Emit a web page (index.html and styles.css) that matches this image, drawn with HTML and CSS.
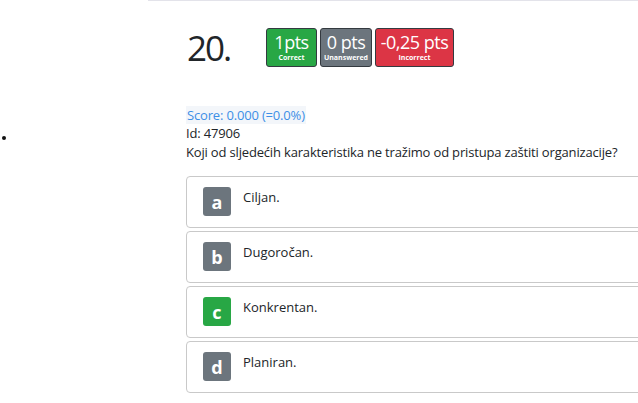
FILE: index.html
```html
<!DOCTYPE html>
<html lang="hr">
<head>
<meta charset="utf-8">
<title>Question 20</title>
<link rel="stylesheet" href="styles.css">
</head>
<body>
<div class="page">
  <div class="side"><span class="bullet"></span></div>
  <div class="main">
    <div class="head">
      <div class="num">20.</div>
      <div class="badges">
        <div class="badge green w1"><span class="big">1pts</span><span class="small">Correct</span></div>
        <div class="badge gray w2"><span class="big">0 pts</span><span class="small">Unanswered</span></div>
        <div class="badge red w3"><span class="big">-0,25 pts</span><span class="small">Incorrect</span></div>
      </div>
    </div>
    <div class="meta">
      <div class="score">Score: 0.000 (=0.0%)</div>
      <div class="line">Id: 47906</div>
      <div class="line">Koji od sljedećih karakteristika ne tražimo od pristupa zaštiti organizacije?</div>
    </div>
    <div class="answers">
      <div class="answer"><span class="letter">a</span><span class="text">Ciljan.</span></div>
      <div class="answer"><span class="letter">b</span><span class="text">Dugoročan.</span></div>
      <div class="answer"><span class="letter ok">c</span><span class="text">Konkrentan.</span></div>
      <div class="answer"><span class="letter">d</span><span class="text">Planiran.</span></div>
    </div>
  </div>
</div>
</body>
</html>
```
FILE: styles.css
```css
html { overflow: hidden; }
body {
  margin: 0;
  background: #fff;
  color: #212529;
  font-family: "Open Sans", "Noto Sans", sans-serif;
}
.page { display: flex; }
.side { width: 148px; flex: none; padding-top: 136px; padding-left: 2px; box-sizing: border-box; }
.bullet { display: block; width: 4px; height: 4px; border-radius: 50%; background: #111; }
.main {
  width: 540px;
  flex: none;
  border-top: 1px solid #e3e3ea;
  padding-left: 38px;
  padding-top: 27px;
}
.head { display: flex; align-items: center; }
.num { width: 80px; font-size: 35px; letter-spacing: -2px; line-height: 39px; color: #212529; padding-left: 1px; box-sizing: border-box; }
.badges { display: flex; gap: 3px; }
.badge {
  display: flex; flex-direction: column; align-items: center;
  height: 39px; box-sizing: border-box;
  border: 1px solid #343a40; border-radius: 3px;
  padding-top: 2px; color: #fff; white-space: nowrap;
}
.w1 { width: 51px; }
.w2 { width: 52px; }
.w3 { width: 79px; }
.big { font-size: 18px; line-height: 22px; letter-spacing: -0.5px; }
.small { font-size: 7px; font-weight: 700; line-height: 10px; }
.green { background: #28a745; }
.gray { background: #6c757d; }
.red { background: #dc3545; }
.meta { margin-top: 39px; font-size: 13px; letter-spacing: -0.17px; line-height: 19px; }
.score { width: fit-content; background: #f3f6fa; color: #3d8fe6; line-height: 18px; padding: 0 1px; }
.answers { margin-top: 14px; display: flex; flex-direction: column; gap: 3px; }
.answer {
  display: flex; align-items: flex-start; gap: 12px;
  border: 1px solid #c9c9c9; border-radius: 4px;
  padding: 10px 16px 11px;
  font-size: 13px;
}
.letter {
  width: 28px; height: 29px; border-radius: 3px;
  background: #6c757d; color: #fff;
  font-weight: 700; font-size: 18px;
  display: flex; align-items: center; justify-content: center;
}
.letter.ok { background: #28a745; }
.text { line-height: 18px; padding-top: 1px; }
```
